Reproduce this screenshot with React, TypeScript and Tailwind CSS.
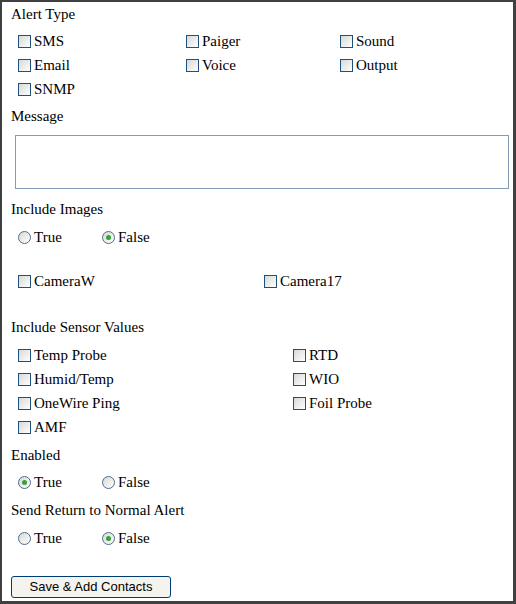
import React from 'react';

const Check = ({ label }: { label: string }) => (
  <label className="flex items-center h-[24px] leading-[24px] whitespace-nowrap">
    <span className="inline-block w-[13px] h-[13px] shrink-0 border border-[#1c5180] bg-gradient-to-br from-[#d8d8d6] to-white mr-[3px]" />
    <span>{label}</span>
  </label>
);

const Radio = ({ label, checked }: { label: string; checked?: boolean }) => (
  <label className="flex items-center h-[24px] leading-[24px] whitespace-nowrap">
    <span className="flex items-center justify-center w-[13px] h-[13px] shrink-0 rounded-full border border-[#4f6d8f] bg-gradient-to-br from-[#d8d8d6] to-white mr-[3px]">
      {checked && <span className="block w-[5px] h-[5px] rounded-full bg-[#35a335]" />}
    </span>
    <span>{label}</span>
  </label>
);

const Label = ({ children, className = '' }: { children: React.ReactNode; className?: string }) => (
  <div className={`h-[24px] leading-[24px] pl-[9px] ${className}`}>{children}</div>
);

const TrueFalse = ({ value, className = '' }: { value: boolean; className?: string }) => (
  <div className={`grid grid-cols-[84px_1fr] pl-[16px] ${className}`}>
    <Radio label="True" checked={value} />
    <Radio label="False" checked={!value} />
  </div>
);

export default function App() {
  return (
    <div className="w-[516px] h-[604px] bg-white text-black border-l-2 border-t-2 border-r-[3px] border-b-[3px] border-[#404040] font-['Liberation_Serif','Times_New_Roman',serif] text-[15px] overflow-hidden">
      <Label>Alert Type</Label>
      <div className="grid grid-cols-[168px_154px_1fr] mt-[3px] pl-[16px]">
        <Check label="SMS" />
        <Check label="Paiger" />
        <Check label="Sound" />
        <Check label="Email" />
        <Check label="Voice" />
        <Check label="Output" />
        <Check label="SNMP" />
      </div>

      <Label className="mt-[3px]">Message</Label>
      <textarea className="block mt-[7px] ml-[13px] w-[494px] h-[54px] border border-[#7f9db9] resize-none outline-none" />

      <Label className="mt-[8px]">Include Images</Label>
      <TrueFalse value={false} className="mt-[4px]" />

      <div className="grid grid-cols-[246px_1fr] mt-[20px] pl-[16px]">
        <Check label="CameraW" />
        <Check label="Camera17" />
      </div>

      <Label className="mt-[22px]">Include Sensor Values</Label>
      <div className="grid grid-cols-[275px_1fr] mt-[4px] pl-[16px]">
        <Check label="Temp Probe" />
        <Check label="RTD" />
        <Check label="Humid/Temp" />
        <Check label="WIO" />
        <Check label="OneWire Ping" />
        <Check label="Foil Probe" />
        <Check label="AMF" />
      </div>

      <Label className="mt-[4px]">Enabled</Label>
      <TrueFalse value={true} className="mt-[3px]" />

      <Label className="mt-[4px]">Send Return to Normal Alert</Label>
      <TrueFalse value={false} className="mt-[4px]" />

      <button className="block mt-[26px] ml-[9px] w-[160px] h-[22px] border border-[#003c74] rounded-[3px] bg-[#f4f3ee] text-center font-['Liberation_Sans',Arial,sans-serif] text-[13px] leading-[20px]">
        Save &amp; Add Contacts
      </button>
    </div>
  );
}
